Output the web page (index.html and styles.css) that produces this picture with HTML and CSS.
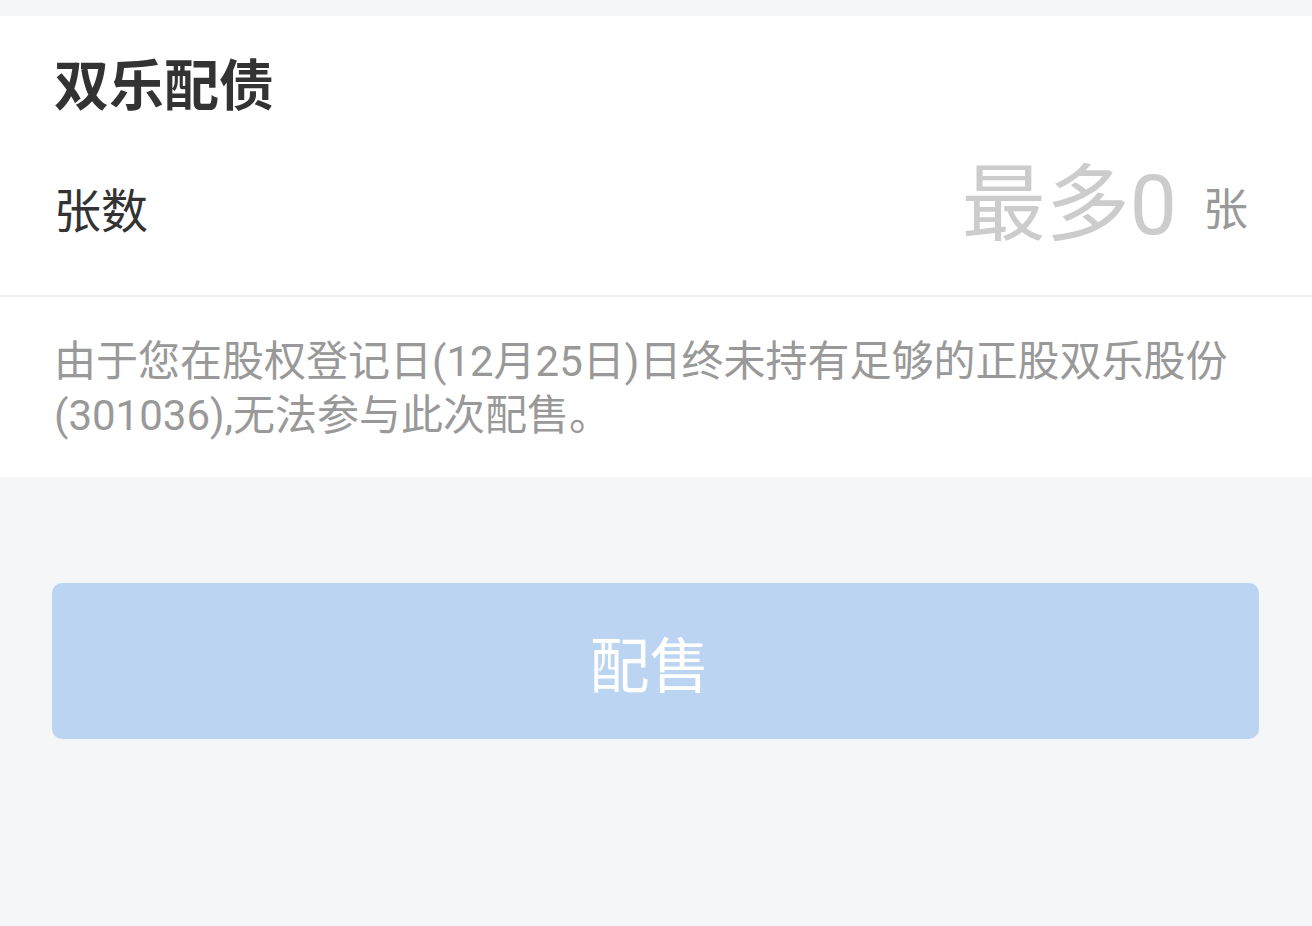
FILE: index.html
```html
<!DOCTYPE html>
<html lang="zh-CN">
<head>
<meta charset="utf-8">
<title>双乐配债</title>
<link rel="stylesheet" href="styles.css">
</head>
<body>
<div class="page">
  <div class="card">
    <div class="title">双乐配债</div>
    <div class="row">
      <div class="label">张数</div>
      <div class="value"><span class="max">最多0</span><span class="unit">张</span></div>
    </div>
  </div>
  <div class="note">由于您在股权登记日(12月25日)日终未持有足够的正股双乐股份(301036),无法参与此次配售。</div>
  <div class="actions">
    <button class="btn" type="button">配售</button>
  </div>
</div>
</body>
</html>
```
FILE: styles.css
```css
html, body {
  margin: 0;
  padding: 0;
  background: #f5f6f8;
  font-family: "Noto Sans CJK SC", "Noto Sans", sans-serif;
}
.page {
  padding-top: 16px;
}
.card {
  background: #ffffff;
  padding: 38px 64px 0 54px;
  border-bottom: 2px solid #f0f0f0;
}
.title {
  font-size: 55px;
  line-height: 55px;
  font-weight: 700;
  color: #333333;
}
.row {
  height: 186px;
  display: flex;
  align-items: center;
  justify-content: space-between;
}
.label {
  font-size: 47px;
  line-height: 47px;
  color: #333333;
  padding-top: 10px;
}
.value {
  display: flex;
  align-items: center;
}
.max {
  font-family: "Roboto", "Noto Sans CJK SC", sans-serif;
  font-weight: 400;
  font-size: 84px;
  line-height: 84px;
  color: #cccccc;
  padding-top: 8px;
}
.unit {
  font-size: 45px;
  line-height: 45px;
  color: #999999;
  margin-left: 26px;
  padding-top: 8px;
}
.note {
  background: #ffffff;
  padding: 38px 54px 34px 54px;
  font-family: "Roboto", "Noto Sans CJK SC", sans-serif;
  font-size: 42px;
  line-height: 54px;
  color: #999999;
}
.actions {
  padding: 106px 53px 0 52px;
}
.btn {
  display: block;
  width: 100%;
  height: 156px;
  border: none;
  border-radius: 10px;
  background: #bbd4f2;
  color: #ffffff;
  font-family: "Noto Sans CJK SC", "Noto Sans", sans-serif;
  font-size: 60px;
  padding: 0 12px 0 0;
}
```
